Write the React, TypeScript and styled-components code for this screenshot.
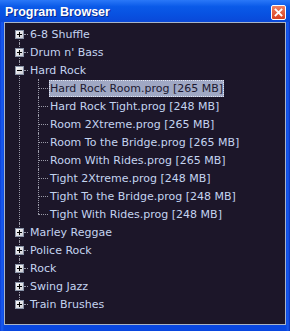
import React from 'react';
import styled, { createGlobalStyle } from 'styled-components';

const GlobalStyle = createGlobalStyle`
  html, body {
    margin: 0;
    padding: 0;
    background: #0a3cd0;
  }
`;

const Window = styled.div`
  width: 290px;
  height: 331px;
  box-sizing: border-box;
  display: flex;
  flex-direction: column;
  background: linear-gradient(to right, #0b3fd8 0px, #1a5cf0 2px, #0a48e0 4px, #0a48e0 286px, #1a5cf0 288px, #0830b8 290px);
  font-family: "DejaVu Sans", Verdana, sans-serif;
`;

const TitleBar = styled.div`
  height: 22px;
  flex: none;
  display: flex;
  align-items: center;
  justify-content: space-between;
  padding: 0 4px 0 5px;
  background: linear-gradient(to bottom, #2a78f8 0%, #0a5ae8 30%, #0850e0 70%, #0a48d8 100%);
`;

const Title = styled.span`
  color: #ffffff;
  font-family: "Liberation Sans", Arial, sans-serif;
  font-weight: bold;
  font-size: 12.5px;
  margin-top: 2px;
  text-shadow: 1px 1px 0 #0a2a90;
`;

const CloseButton = styled.div`
  width: 13px;
  height: 13px;
  margin-top: 2px;
  border: 1px solid #ffffff;
  border-radius: 2px;
  background: linear-gradient(to bottom, #f08060, #d84020);
  display: flex;
  align-items: center;
  justify-content: center;
`;

const Panel = styled.div`
  flex: 1;
  margin: 0 4px 6px 4px;
  border: 1px solid #a8b4c8;
  background: #1c1629;
  padding-top: 2px;
  overflow: hidden;
`;

const TopList = styled.ul`
  list-style: none;
  margin: 0;
  padding: 0;
`;

const TopItem = styled.li<{ $first?: boolean; $last?: boolean }>`
  position: relative;
  &::before {
    content: '';
    position: absolute;
    left: 14px;
    top: ${p => (p.$first ? '9px' : '0')};
    height: ${p => (p.$last ? '9px' : 'auto')};
    bottom: ${p => (p.$last ? 'auto' : '0')};
    border-left: 1px dotted #9a9aa8;
  }
`;

const Row = styled.div<{ $indent: number }>`
  position: relative;
  height: 18px;
  display: flex;
  align-items: center;
  padding-left: ${p => p.$indent}px;
`;

const BoxWrap = styled.div`
  position: relative;
  z-index: 1;
  width: 9px;
  height: 9px;
  flex: none;
`;

const Connector = styled.span<{ $width: number }>`
  width: ${p => p.$width}px;
  flex: none;
  border-top: 1px dotted #9a9aa8;
  align-self: center;
`;

const Label = styled.span<{ $selected?: boolean }>`
  font-size: 11px;
  line-height: 15px;
  white-space: nowrap;
  padding: 1px;
  margin-left: 1px;
  color: ${p => (p.$selected ? '#1c1830' : '#c4d4f0')};
  background: ${p => (p.$selected ? '#a0a8c4' : 'transparent')};
  outline: ${p => (p.$selected ? '1px dotted #e0e4f0' : 'none')};
  outline-offset: -1px;
`;

const ChildList = styled.ul`
  list-style: none;
  margin: 0;
  padding: 0;
  position: relative;
`;

const ChildItem = styled.li<{ $last?: boolean }>`
  position: relative;
  &::before {
    content: '';
    position: absolute;
    left: 33px;
    top: 0;
    height: ${p => (p.$last ? '9px' : 'auto')};
    bottom: ${p => (p.$last ? 'auto' : '0')};
    border-left: 1px dotted #9a9aa8;
  }
`;

const Expander = ({ open }: { open: boolean }) => (
  <BoxWrap>
    <svg width="9" height="9" viewBox="0 0 9 9" style={{ display: 'block' }}>
      <defs>
        <linearGradient id={open ? 'gm' : 'gp'} x1="0" y1="0" x2="1" y2="1">
          <stop offset="0" stopColor="#ffffff" />
          <stop offset="1" stopColor="#c8c8d0" />
        </linearGradient>
      </defs>
      <rect x="0.5" y="0.5" width="8" height="8" fill={`url(#${open ? 'gm' : 'gp'})`} stroke="#8a94a8" />
      <rect x="2" y="4" width="5" height="1" fill="#000" />
      {!open && <rect x="4" y="2" width="1" height="5" fill="#000" />}
    </svg>
  </BoxWrap>
);

const groups = [
  '6-8 Shuffle',
  "Drum n' Bass",
  'Hard Rock',
  'Marley Reggae',
  'Police Rock',
  'Rock',
  'Swing Jazz',
  'Train Brushes',
];

const hardRock = [
  'Hard Rock Room.prog [265 MB]',
  'Hard Rock Tight.prog [248 MB]',
  'Room 2Xtreme.prog [265 MB]',
  'Room To the Bridge.prog [265 MB]',
  'Room With Rides.prog [265 MB]',
  'Tight 2Xtreme.prog [248 MB]',
  'Tight To the Bridge.prog [248 MB]',
  'Tight With Rides.prog [248 MB]',
];

export default function App() {
  return (
    <>
      <GlobalStyle />
      <Window>
        <TitleBar>
          <Title>Program Browser</Title>
          <CloseButton>
            <svg width="9" height="9" viewBox="0 0 9 9">
              <path d="M1.5 1.5 L7.5 7.5 M7.5 1.5 L1.5 7.5" stroke="#fff" strokeWidth="1.8" strokeLinecap="square" />
            </svg>
          </CloseButton>
        </TitleBar>
        <Panel>
          <TopList>
            {groups.map((g, i) => {
              const open = g === 'Hard Rock';
              return (
                <TopItem key={g} $first={i === 0} $last={i === groups.length - 1}>
                  <Row $indent={10}>
                    <Expander open={open} />
                    <Connector $width={4} />
                    <Label>{g}</Label>
                  </Row>
                  {open && (
                    <ChildList>
                      {hardRock.map((c, j) => (
                        <ChildItem key={c} $last={j === hardRock.length - 1}>
                          <Row $indent={33}>
                            <Connector $width={10} />
                            <Label $selected={j === 0}>{c}</Label>
                          </Row>
                        </ChildItem>
                      ))}
                    </ChildList>
                  )}
                </TopItem>
              );
            })}
          </TopList>
        </Panel>
      </Window>
    </>
  );
}
